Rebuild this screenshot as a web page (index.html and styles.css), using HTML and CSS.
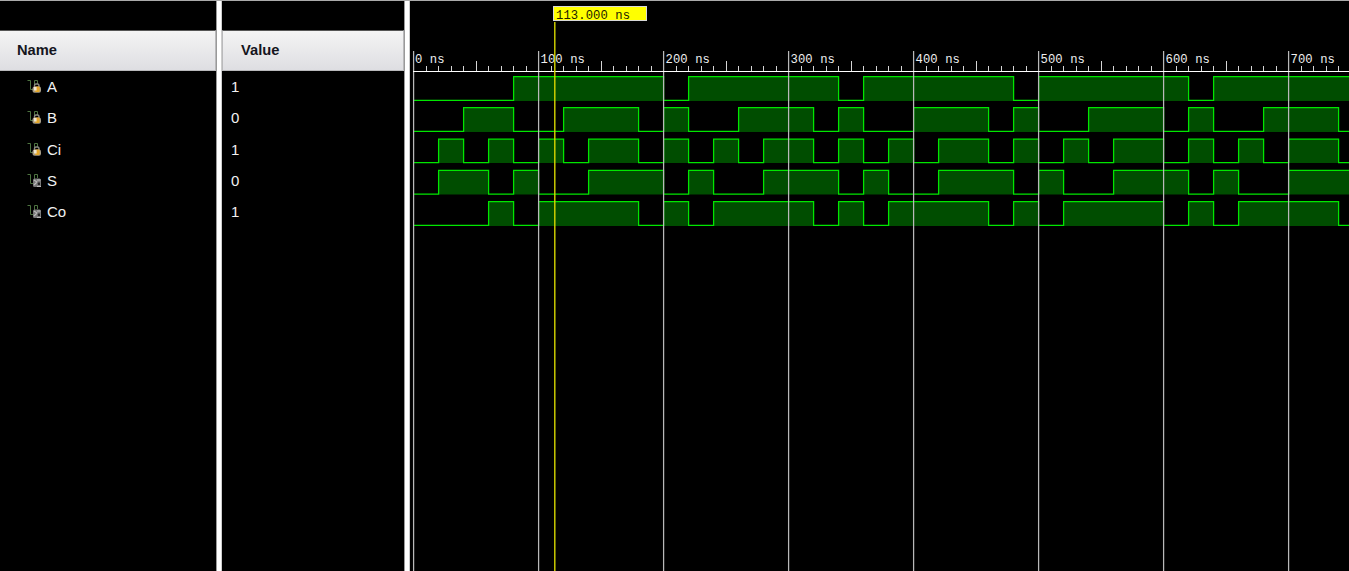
FILE: index.html
```html
<!DOCTYPE html>
<html lang="en">
<head>
<meta charset="utf-8">
<title>Waveform</title>
<link rel="stylesheet" href="styles.css">
</head>
<body>
<svg class="defs" width="0" height="0">
  <symbol id="pulse" viewBox="0 0 16 15">
    <path d="M0.5 1.5H3.5V10.5H7.5V1.5H10.5V5" fill="none" stroke="#4d7340" stroke-width="1"/>
  </symbol>
  <symbol id="input" viewBox="0 0 16 15">
    <use href="#pulse"/>
    <path d="M7.5 8V6.5Q7.5 5 9 5H10.5Q12 5 12 7V8" fill="none" stroke="#8b8b83" stroke-width="1.4"/>
    <rect x="5.5" y="7.5" width="8.5" height="6.3" rx="2" fill="#a69c85"/>
    <rect x="8" y="7.5" width="4.6" height="5.5" rx="1" fill="#e6a92a"/>
    <rect x="7" y="8" width="2.6" height="3.5" fill="#eee6d2"/>
  </symbol>
  <symbol id="output" viewBox="0 0 16 15">
    <use href="#pulse"/>
    <rect x="6" y="5.5" width="8" height="8.5" rx="1.5" fill="#777"/>
    <path d="M7 7L10 9L7 12M10 7H13.5M10 13.5H14" fill="none" stroke="#bbb" stroke-width="1.2"/>
    <path d="M10.5 9.5h2.5v2.5h-2z" fill="#222"/>
  </symbol>
</svg>
<main class="viewer">
  <section class="column names">
    <header class="head">Name</header>
    <ul class="rows">
      <li class="row"><svg class="icon"><use href="#input"/></svg>A</li>
      <li class="row"><svg class="icon"><use href="#input"/></svg>B</li>
      <li class="row"><svg class="icon"><use href="#input"/></svg>Ci</li>
      <li class="row"><svg class="icon"><use href="#output"/></svg>S</li>
      <li class="row"><svg class="icon"><use href="#output"/></svg>Co</li>
    </ul>
  </section>
  <div class="splitter"></div>
  <section class="column values">
    <header class="head">Value</header>
    <ul class="rows">
      <li class="row">1</li>
      <li class="row">0</li>
      <li class="row">1</li>
      <li class="row">0</li>
      <li class="row">1</li>
    </ul>
  </section>
  <div class="splitter"></div>
  <section class="plot">
    <svg class="waves" id="waves" width="939" height="571" viewBox="410 0 939 571">
      <g id="signals"></g>
      <path class="grid" id="grid"/>
      <path class="tick" id="ticks"/>
      <path class="axis" d="M413 71.5H1349"/>
      <g class="time">
        <text x="415" y="63">0 ns</text>
        <text x="540.5" y="63">100 ns</text>
        <text x="665.5" y="63">200 ns</text>
        <text x="790.5" y="63">300 ns</text>
        <text x="915.5" y="63">400 ns</text>
        <text x="1040.5" y="63">500 ns</text>
        <text x="1165.5" y="63">600 ns</text>
        <text x="1290.5" y="63">700 ns</text>
      </g>
      <path class="cursor" d="M554.8 22V571"/>
      <rect class="flag" x="553.5" y="6.5" width="93" height="14"/>
      <text class="flag-text" x="556" y="19">113.000 ns</text>
    </svg>
  </section>
</main>
<script src="script.js"></script>
</body>
</html>
```
FILE: styles.css
```css
body {
  margin: 0;
  background: #000;
  color: #f2f2f2;
  font-family: "Liberation Sans", Arial, sans-serif;
  font-size: 15px;
  overflow: hidden;
}
.defs { position: absolute; }
.viewer {
  display: flex;
  width: 1349px;
  height: 571px;
  box-sizing: border-box;
  border-top: 1px solid #aaa;
}
.column { padding-top: 29px; flex: none; }
.names { width: 216px; }
.values { width: 182px; }
.head {
  box-sizing: border-box;
  height: 41px;
  padding: 0 17px;
  border: 1px solid #b9b9bb;
  border-top-color: #555;
  border-left: 0;
  background: linear-gradient(#f4f4f4, #dedee2);
  color: #15151d;
  font-size: 14.7px;
  font-weight: bold;
  line-height: 39px;
}
.values .head { padding-left: 18px; border-left: 1px solid #b9b9bb; }
.rows { list-style: none; margin: 0; padding: 0; }
.row {
  display: flex;
  align-items: center;
  height: 31.25px;
  padding-left: 27px;
}
.values .row { padding-left: 9px; }
.icon { width: 16px; height: 15px; margin-right: 4px; }
.splitter {
  flex: none;
  box-sizing: border-box;
  width: 6px;
  background: #fff;
  border-left: 1px solid #999;
  border-right: 1px solid #ccc;
}
.plot { flex: none; width: 939px; overflow: hidden; }
.waves { display: block; margin-top: -1px; }
.fill { fill: #004d00; }
.trace { fill: none; stroke: #00e600; stroke-width: 1.25; }
.grid { stroke: #b9b9b9; stroke-width: 1.25; }
.tick { stroke: #d5d5d5; stroke-width: 1; }
.axis { stroke: #fff; stroke-width: 1.2; }
.cursor { stroke: #d6d600; stroke-width: 1.4; }
.flag { fill: #ff0; stroke: #d8d8d8; }
.time text, .flag-text {
  font-family: "Liberation Mono", monospace;
  font-size: 12.2px;
  letter-spacing: 0.1px;
  white-space: pre;
}
.time text { fill: #eee; }
.flag-text { fill: #222200; }
```
FILE: script.js
```js
// Each signal lists its [rise, fall] times in steps of 20 ns.
const signals = [
  { top: 76.6, bottom: 100.4, high: [[4,10],[11,17],[18,24],[25,31],[32,38]] },
  { top: 107.6, bottom: 131.4, high: [[2,4],[6,9],[10,11],[13,16],[17,18],[20,23],[24,25],[27,30],[31,32],[34,37]] },
  { top: 139.2, bottom: 162.6, high: [[1,2],[3,4],[5,6],[7,9],[10,11],[12,13],[14,16],[17,18],[19,20],[21,23],[24,25],[26,27],[28,30],[31,32],[33,34],[35,37]] },
  { top: 170.4, bottom: 194, high: [[1,3],[4,5],[7,10],[11,12],[14,17],[18,19],[21,24],[25,26],[28,31],[32,33],[35,38]] },
  { top: 201.6, bottom: 225.4, high: [[3,4],[5,9],[10,11],[12,16],[17,18],[19,23],[24,25],[26,30],[31,32],[33,37]] }
];
const origin = 413.6;
const step = 25;

function addPath(cls, d) {
  const p = document.createElementNS("http://www.w3.org/2000/svg", "path");
  p.setAttribute("class", cls);
  p.setAttribute("d", d);
  document.getElementById("signals").appendChild(p);
}

for (const s of signals) {
  let fill = "";
  let trace = `M${origin} ${s.bottom}`;
  for (const [a, b] of s.high) {
    const x1 = origin + a * step;
    const x2 = origin + b * step;
    fill += `M${x1} ${s.bottom + 0.5}V${s.top}H${x2}V${s.bottom + 0.5}Z`;
    trace += `H${x1}V${s.top}H${x2}V${s.bottom}`;
  }
  addPath("fill", fill);
  addPath("trace", trace + "H1370");
}

let grid = "";
let ticks = "";
for (let i = 0; i < 75; i++) {
  const x = origin + i * 12.5;
  if (i % 10 === 0) grid += `M${x} 51V571`;
  else ticks += `M${Math.floor(x) + 0.5} ${i % 5 === 0 ? 61 : 66}V71`;
}
document.getElementById("grid").setAttribute("d", grid);
document.getElementById("ticks").setAttribute("d", ticks);
```
